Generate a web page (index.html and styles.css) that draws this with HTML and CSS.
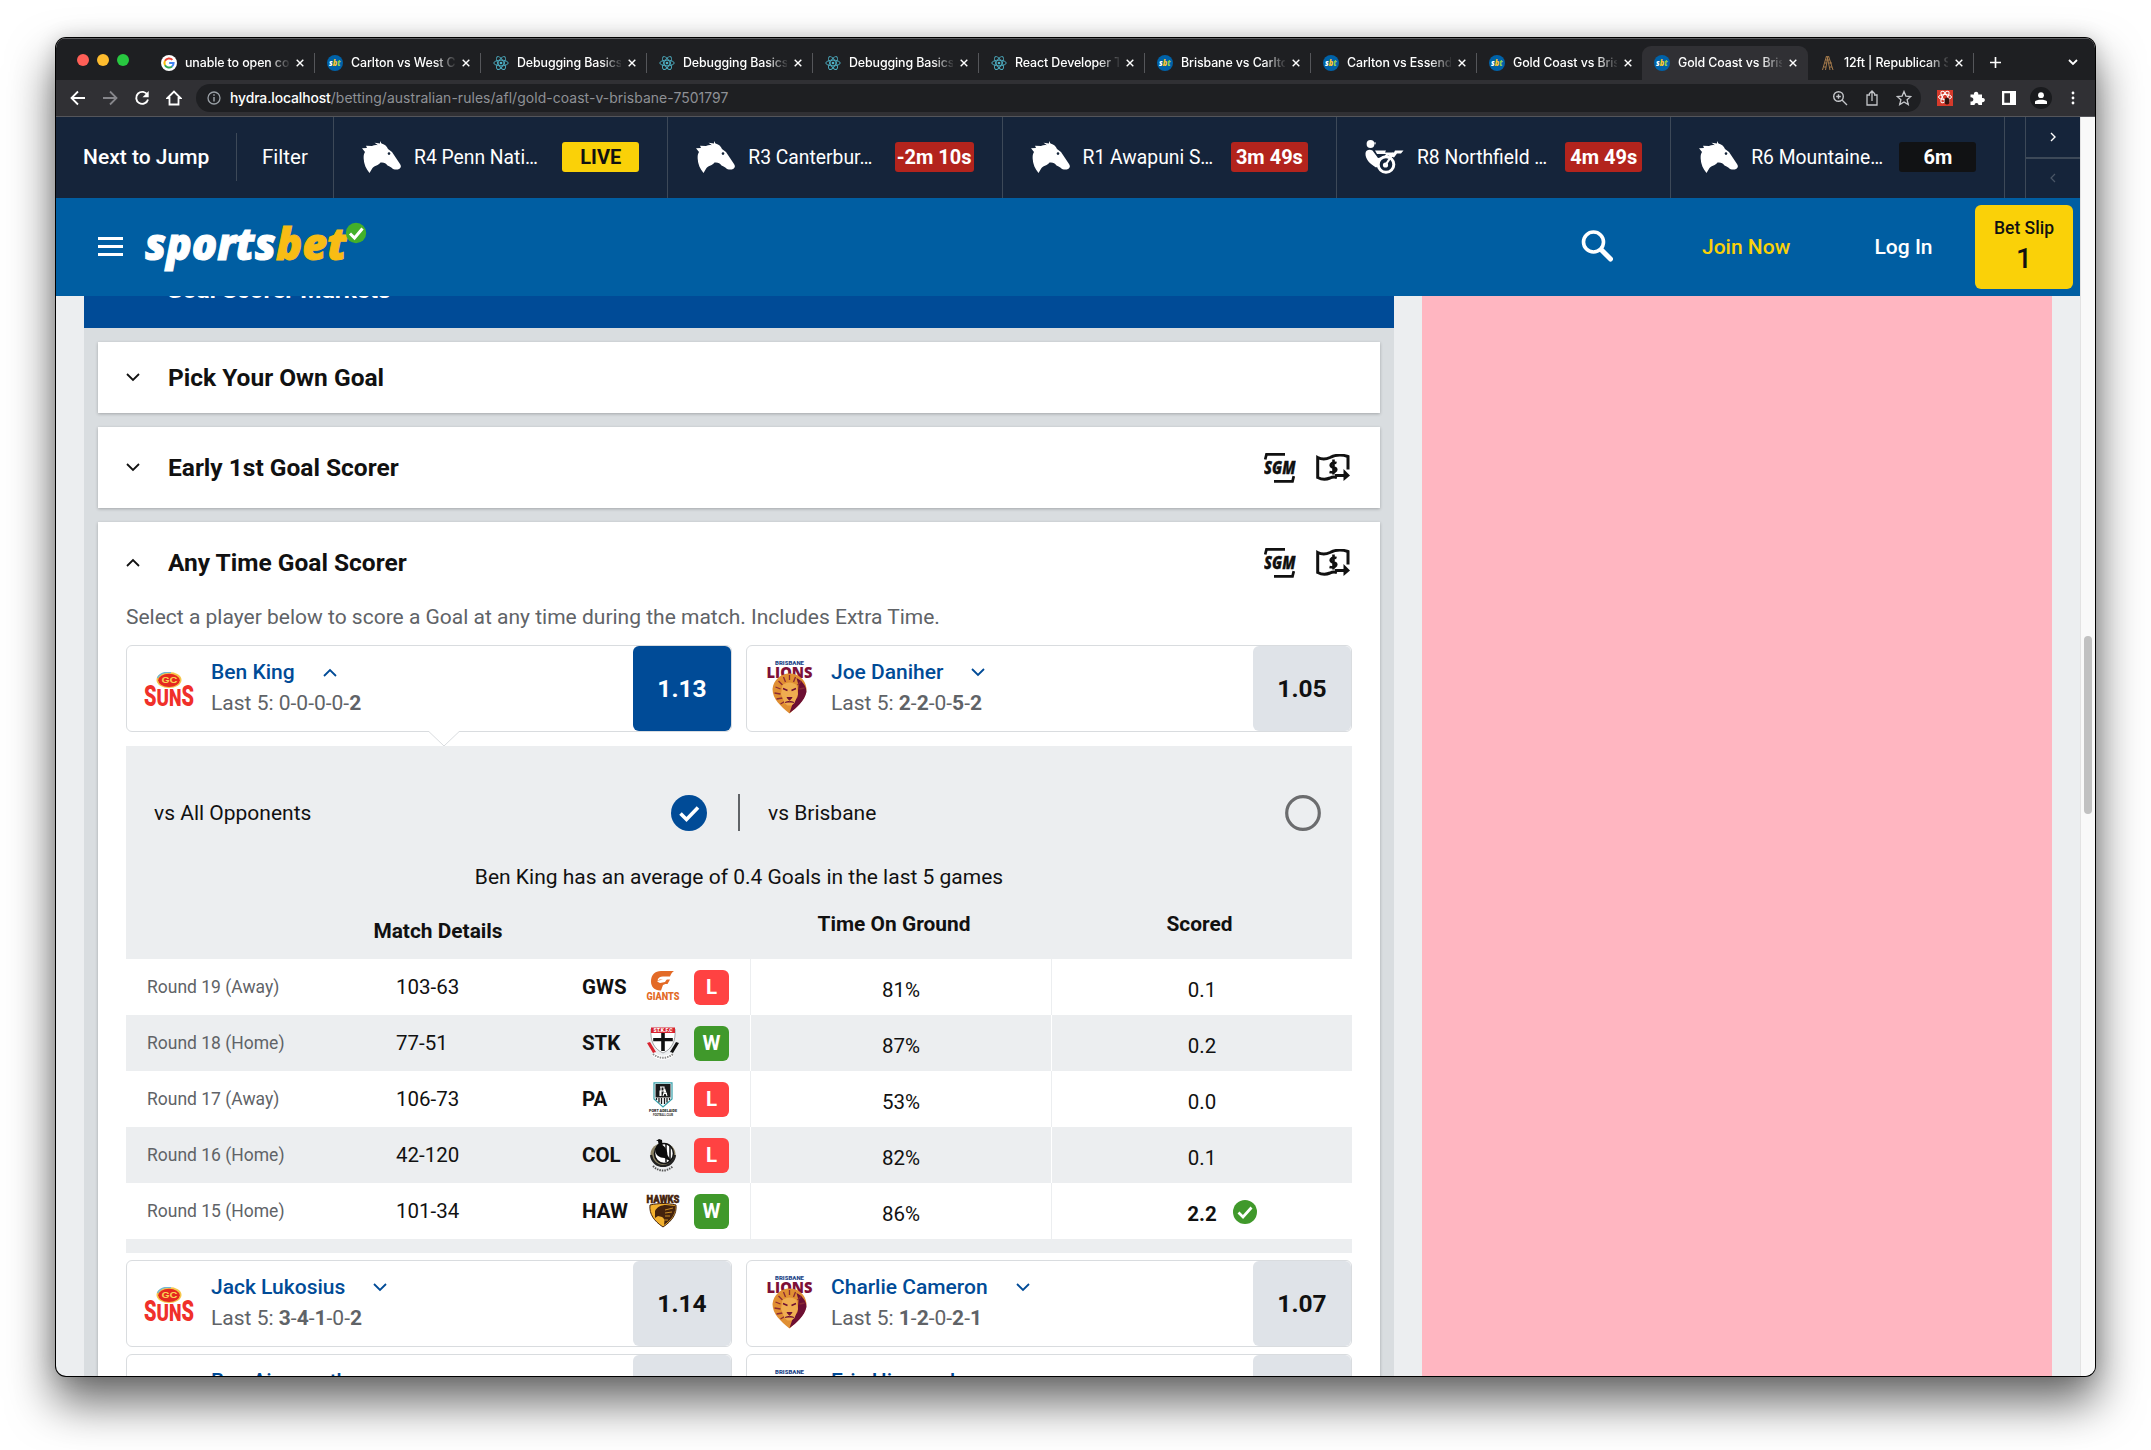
FILE: index.html
```html
<!DOCTYPE html>
<html lang="en">
<head>
<meta charset="utf-8">
<title>Gold Coast vs Brisbane</title>
<link rel="stylesheet" href="styles.css">
</head>
<body>
<svg class="sprite" aria-hidden="true">
  <symbol id="google" viewBox="0 0 16 16"><circle cx="8" cy="8" r="8" fill="#fff"/><g fill="none" stroke-width="2"><path d="M11.4 4.9A4.6 4.6 0 0 0 4 5.8" stroke="#ea4335"/><path d="M4 5.8a4.6 4.6 0 0 0 0 4.4" stroke="#fbbc05"/><path d="M4 10.2a4.6 4.6 0 0 0 7 1.3" stroke="#34a853"/><path d="M11 11.5A4.6 4.6 0 0 0 12.6 8H8.2" stroke="#4285f4"/></g></symbol>
  <symbol id="sbt" viewBox="0 0 16 16"><circle cx="8" cy="8" r="8" fill="#0062a8"/><text x="2" y="11" font-family="Open Sans" font-weight="800" font-style="italic" font-size="9" textLength="11.500" lengthAdjust="spacingAndGlyphs" fill="#fff">s<tspan fill="#ffc629">b</tspan><tspan fill="#8fd14f">t</tspan></text></symbol>
  <symbol id="react" viewBox="0 0 16 16"><g fill="none" stroke="#4fb3c8" stroke-width=".9"><ellipse cx="8" cy="8" rx="7.2" ry="2.8"/><ellipse cx="8" cy="8" rx="7.2" ry="2.8" transform="rotate(60 8 8)"/><ellipse cx="8" cy="8" rx="7.2" ry="2.8" transform="rotate(120 8 8)"/></g><circle cx="8" cy="8" r="1.3" fill="#4fb3c8"/></symbol>
  <symbol id="ladder" viewBox="0 0 16 16"><path d="M6.500 1 2.500 15M8 1 5.500 15M8.500 1l4.500 14M7 1l3 14M5.500 5h4M5 8h2M4 12h2M9 8h3M10 12h2" fill="none" stroke="#a57b4c" stroke-width="1"/></symbol>
  <symbol id="x" viewBox="0 0 8 8"><path d="M.7.7l6.600 6.600M7.300.7L.7 7.300" stroke="#fff" stroke-width="1.400"/></symbol>
  <symbol id="horse" viewBox="0 0 39 32"><path d="M18 0l1.500 2.500C22 3 25 5 26 8l4 3 4 6 4 6c1.500 2 1 4-1 5s-4 .5-6 0c-2-2-3-2.500-5.500-3.500-1.500-2.500-4-3.500-7-3-2 3-6 3-8 5.500L7.500 32C4 28 2 23 1.700 18c-.2-3 0-5 1.300-7L0 7.200l5-.3-1-2.200 6 .3c2-1 4-1.200 6-.8L12.500 1.800 18 2.500z" fill="#fff"/><circle cx="27" cy="12.600" r="1.300" fill="#14243a"/></symbol>
  <symbol id="harness" viewBox="0 0 39 34"><circle cx="5.500" cy="4" r="3.900" fill="#fff"/><path d="M9 2.500h2l-1 2.500z" fill="#fff"/><path d="M.5 13c.5-3 4-4 7-2.500L13 18l6-1 2-3h-9l-2-3.500h11l-1 2h9l1-2h8.500l-2.500 3h-4l-3 4-6-2-8 6-2 5-2 1C5 24 0 19 .5 13z" fill="#fff"/><circle cx="21" cy="24.500" r="7.800" fill="#14243a" stroke="#fff" stroke-width="3"/><circle cx="20.500" cy="25" r="2.600" fill="#fff"/><path d="M20.500 25l8-12" stroke="#fff" stroke-width="2.200" fill="none"/></symbol>
  <symbol id="down" viewBox="0 0 14 9"><path d="M1 1l6 6 6-6" fill="none" stroke="currentColor" stroke-width="1.800"/></symbol>
  <symbol id="up" viewBox="0 0 14 9"><path d="M1 8l6-6 6 6" fill="none" stroke="currentColor" stroke-width="1.800"/></symbol>
  <symbol id="sgm" viewBox="0 0 32 30"><path d="M1.200 6.500L2.500 1.300H21M10 28.300h18.500l1.300-5.200" fill="none" stroke="#111" stroke-width="2.700"/><text x="0" y="20.700" font-family="Open Sans" font-weight="800" font-style="italic" font-size="17" textLength="31.500" lengthAdjust="spacingAndGlyphs" fill="#111" stroke="#111" stroke-width=".3">SGM</text></symbol>
  <symbol id="cash" viewBox="0 0 34 27"><path d="M21 23.500c-3-1-5-.5-7 .5-4 1.700-8 1.700-12.300-.5V3.500c4 2 8 2 12.300 0 6-3 12-3 18-1v13" fill="none" stroke="#111" stroke-width="3"/><path d="M20.500 9c-6-2-8 4-3 4.500 5 .5 3 6-4 4.500M17.500 5.500v15" fill="none" stroke="#111" stroke-width="2.600"/><path d="M19 21.500h11" stroke="#111" stroke-width="3"/><path d="M27.500 15l6.500 6.500-6.500 5.500z" fill="#111"/></symbol>
  <symbol id="suns" viewBox="0 0 50 34"><ellipse cx="25" cy="8" rx="12.500" ry="8" fill="#f6c64a"/><path d="M13.500 6C16 1 22 0 27 .5" fill="none" stroke="#6fb7d8" stroke-width="1.400"/><ellipse cx="25" cy="8.300" rx="10.800" ry="6.600" fill="#e5281f"/><text x="17.500" y="11.300" font-family="Inter" font-weight="700" font-size="8" textLength="16" lengthAdjust="spacingAndGlyphs" fill="#f9cf55">GC</text><g font-family="Roboto" font-weight="900" fill="#f0302a"><text x="0" y="33.500" font-size="29" textLength="12.500" lengthAdjust="spacingAndGlyphs">S</text><text x="12.500" y="33.500" font-size="23.500" textLength="12.500" lengthAdjust="spacingAndGlyphs">U</text><text x="25" y="33.500" font-size="23.500" textLength="12.500" lengthAdjust="spacingAndGlyphs">N</text><text x="37.500" y="33.500" font-size="29" textLength="12.500" lengthAdjust="spacingAndGlyphs">S</text></g></symbol>
  <symbol id="lions" viewBox="0 0 46 54"><text x="8.500" y="4.500" font-family="Roboto" font-weight="900" font-size="5.800" textLength="29" lengthAdjust="spacingAndGlyphs" fill="#1c4587">BRISBANE</text><text x="0" y="17.500" font-family="Open Sans" font-weight="800" font-size="16.500" textLength="46" lengthAdjust="spacingAndGlyphs" fill="#7d1038">LIONS</text><path d="M23 13.500c9 0 16 6 17 15 0 10-8 17-17 25C14 46 6 39 6 29 7 20 14 13.500 23 13.500z" fill="#e08f33"/><path d="M30 18c6 3 10 8 10 14-2 9-10 16-17 21l3-9 5-7 1-12z" fill="#6d0f33"/><path d="M12 21l4 4M9 27l5 2M8 33l6 1M10 39l6-1M14 44l5-3M17 17l2 5M23 15v5M29 17l-2 5M35 21l-4 4M38 28l-5 1" stroke="#8a2a35" stroke-width="1.300"/><path d="M16 25c4-3.500 10-3.500 14 0l1.500 9L28 43l-3 2.500h-4L18 43l-3.500-9z" fill="#efad50"/><path d="M16.500 28.500l4.500 2M29.500 28.500l-4.500 2" stroke="#6d0f33" stroke-width="1.400"/><path d="M20.500 37.500h5l-2.500 2.800zM18.500 42.500c3-1.500 6-1.500 9 0" fill="#6d0f33" stroke="#6d0f33" stroke-width="1"/></symbol>
  <symbol id="gws" viewBox="0 0 34 34"><path d="M28 1c-2 1-3 3-4 5.500h-7c-3 0-5 1.500-5.500 4H21c-1 3-2 4-4 4.500l-2 5.500C9 21 5 17 5 11.500 5 5 9 1 15 1z" fill="#e36a26"/><path d="M13 9.500h11l-2.500 4.500h-5z" fill="#e36a26"/><path d="M11 11.500l6-2.500h4l-2 3-5 1z" fill="#fff"/><text x=".5" y="29.500" font-family="Roboto" font-weight="900" font-size="11" textLength="33" lengthAdjust="spacingAndGlyphs" fill="#e36a26">GIANTS</text></symbol>
  <symbol id="stk" viewBox="0 0 34 34"><path d="M5 3h24c1 12-3 20-12 24C8 23 4 15 5 3z" fill="#fff" stroke="#8d8f92" stroke-width=".8"/><path d="M5 1.500h24V7H5z" fill="#d8232f"/><text x="7.500" y="6.200" font-family="Roboto" font-weight="900" font-size="5" textLength="19" fill="#fff">ST.K.F.C</text><path d="M15.200 7h3.600v5h8v3.200h-8V25h-3.600v-9.800h-8V12h8z" fill="#111"/><path d="M1 17l3-1 6 10-3 1z" fill="#d8232f"/><path d="M33 17l-3-1-6 10 3 1z" fill="#111"/><path d="M7 28c6 5 14 5 20 0" fill="none" stroke="#fff" stroke-width="4"/><path d="M7 28c6 5 14 5 20 0" fill="none" stroke="#8b8b8b" stroke-width="2" stroke-dasharray="1.500 1"/></symbol>
  <symbol id="pa" viewBox="0 0 34 34"><path d="M8 .8h18V17l-9 8-9-8z" fill="#fff" stroke="#36a0ab" stroke-width="1.200"/><path d="M9.500 2h15v13.500h-15z" fill="#18191b"/><path d="M10.500 16v2M13 16v4.500M15.500 16v6M18.500 16v6M21 16v4.500M23.500 16v2" stroke="#18191b" stroke-width="1.300"/><path d="M14 5h4v4h-4v5M15 5v9M17 14l2-6 2 6M18 11.500h3" fill="none" stroke="#fff" stroke-width="1.100"/><text x="3" y="30" font-family="Roboto" font-weight="900" font-size="4" textLength="28" lengthAdjust="spacingAndGlyphs" fill="#222">PORT ADELAIDE</text><text x="7" y="33.500" font-family="Roboto" font-weight="700" font-size="2.800" textLength="20" fill="#333">FOOTBALL CLUB</text></symbol>
  <symbol id="col" viewBox="0 0 34 34"><ellipse cx="17" cy="16.500" rx="12.500" ry="11.500" fill="#8a8163"/><ellipse cx="18" cy="15.500" rx="9.500" ry="10" fill="#fff" stroke="#111" stroke-width="1.600"/><path d="M20 6v18M24 8v15" stroke="#111" stroke-width="1.500"/><path d="M10 3l3-2 3 1 .5 5c3 2 5 6 5 10l4 7-7-4c-5 0-9-3-9-7s1-6 3-7l-.5-3z" fill="#0c0c0c"/><path d="M5 17c1 7 6 11 12 11s11-4 12-11" fill="none" stroke="#222" stroke-width="2.200"/><path d="M7 28c6 6 14 6 20 0" fill="none" stroke="#555" stroke-width="2" stroke-dasharray="1.500 1"/></symbol>
  <symbol id="haw" viewBox="0 0 34 34"><text x=".5" y="8.500" font-family="Roboto" font-weight="900" font-size="11" textLength="33" lengthAdjust="spacingAndGlyphs" fill="#45230d" stroke="#45230d" stroke-width=".5">HAWKS</text><path d="M4 11c9-2 17-2 26 0 1 9-4 16-13 22C8 27 3 20 4 11z" fill="#f3b12e" stroke="#45230d" stroke-width="1"/><path d="M9 17c2-4 6-6 11-6l9.500 1c0 8-4 14-11.500 19 1-5 0-7-2-8l-4-1-3 2z" fill="#45230d"/><path d="M19 16l8-2M19 19l7-1M19 22l5 0M18 26l4 0" stroke="#c98c24" stroke-width="1"/></symbol>
  <symbol id="tick" viewBox="0 0 24 24"><circle cx="12" cy="12" r="12" fill="#40992b"/><path d="M5.500 12.500l4.500 4.500 8.500-9.500" fill="none" stroke="#fff" stroke-width="2.700"/></symbol>
</svg>

<div class="window">
  <div class="tabs">
    <div class="lights"><i class="red"></i><i class="amber"></i><i class="green"></i></div>
    <div class="tab"><svg class="fav"><use href="#google"/></svg><span>unable to open co</span><svg class="close"><use href="#x"/></svg></div>
    <div class="tab"><svg class="fav"><use href="#sbt"/></svg><span>Carlton vs West C</span><svg class="close"><use href="#x"/></svg></div>
    <div class="tab"><svg class="fav"><use href="#react"/></svg><span>Debugging Basics</span><svg class="close"><use href="#x"/></svg></div>
    <div class="tab"><svg class="fav"><use href="#react"/></svg><span>Debugging Basics</span><svg class="close"><use href="#x"/></svg></div>
    <div class="tab"><svg class="fav"><use href="#react"/></svg><span>Debugging Basics</span><svg class="close"><use href="#x"/></svg></div>
    <div class="tab"><svg class="fav"><use href="#react"/></svg><span>React Developer T</span><svg class="close"><use href="#x"/></svg></div>
    <div class="tab"><svg class="fav"><use href="#sbt"/></svg><span>Brisbane vs Carlto</span><svg class="close"><use href="#x"/></svg></div>
    <div class="tab"><svg class="fav"><use href="#sbt"/></svg><span>Carlton vs Essend</span><svg class="close"><use href="#x"/></svg></div>
    <div class="tab before-active"><svg class="fav"><use href="#sbt"/></svg><span>Gold Coast vs Bris</span><svg class="close"><use href="#x"/></svg></div>
    <div class="tab active"><svg class="fav"><use href="#sbt"/></svg><span>Gold Coast vs Bris</span><svg class="close"><use href="#x"/></svg></div>
    <div class="tab"><svg class="fav"><use href="#ladder"/></svg><span>12ft | Republican S</span><svg class="close"><use href="#x"/></svg></div>
    <svg class="plus" viewBox="0 0 12 12"><path d="M6 0v12M0 6h12" stroke="#fff" stroke-width="1.800"/></svg>
    <svg class="tab-menu" viewBox="0 0 10 7"><path d="M1 1l4 4 4-4" fill="none" stroke="#fff" stroke-width="1.800"/></svg>
  </div>

  <div class="toolbar">
    <svg class="nav" viewBox="0 0 16 16"><path d="M15 8H2M8 1.500L1.500 8 8 14.500" fill="none" stroke="#fff" stroke-width="1.800"/></svg>
    <svg class="nav" viewBox="0 0 16 16"><path d="M1 8h13M8 1.500L14.500 8 8 14.500" fill="none" stroke="#85858a" stroke-width="1.800"/></svg>
    <svg class="nav" viewBox="0 0 16 16"><path d="M13.500 5A6 6 0 1 0 14 9.500" fill="none" stroke="#fff" stroke-width="1.900"/><path d="M14.700 1v6.200H8.500z" fill="#fff"/></svg>
    <svg class="nav" viewBox="0 0 16 16"><path d="M1.500 8L8 1.500 14.500 8H12.500v6.500h-9V8z" fill="none" stroke="#fff" stroke-width="1.800"/></svg>
    <div class="omnibox">
      <svg class="info" viewBox="0 0 14 14"><circle cx="7" cy="7" r="6" fill="none" stroke="#9aa0a6" stroke-width="1.300"/><path d="M7 6v4.500M7 3.300v1.500" stroke="#9aa0a6" stroke-width="1.500"/></svg>
      <p class="url"><b>hydra.localhost</b>/betting/australian-rules/afl/gold-coast-v-brisbane-7501797</p>
      <svg class="act" viewBox="0 0 16 16"><circle cx="6.500" cy="6.500" r="4.800" fill="none" stroke="#c4c6ca" stroke-width="1.400"/><path d="M10 10l5 5M4.200 6.500h4.600M6.500 4.200v4.600" stroke="#c4c6ca" stroke-width="1.400"/></svg>
      <svg class="act" viewBox="0 0 16 16"><path d="M6 5H3v10h10V5h-3M8 11V1.500M5 4l3-3 3 3" fill="none" stroke="#c4c6ca" stroke-width="1.300"/></svg>
      <svg class="act" viewBox="0 0 16 16"><path d="M8 1.500l1.900 4.600 4.900.4-3.700 3.200 1.200 4.900L8 12l-4.300 2.600 1.200-4.900L1.200 6.500l4.900-.4z" fill="none" stroke="#c4c6ca" stroke-width="1.300"/></svg>
    </div>
    <svg class="ext" viewBox="0 0 16 16"><path d="M0 0h16v16H0z" fill="#d63a2b"/><g fill="none" stroke="#fff"><ellipse cx="8" cy="7" rx="6.500" ry="2.500"/><ellipse cx="8" cy="7" rx="6.500" ry="2.500" transform="rotate(60 8 7)"/><ellipse cx="8" cy="7" rx="6.500" ry="2.500" transform="rotate(120 8 7)"/></g><ellipse cx="10" cy="11" rx="2.500" ry="3.500" fill="#34110d"/></svg>
    <svg class="ext" viewBox="0 0 16 16"><path d="M1.500 4.500H5a2.200 2.200 0 1 1 4.200 0H13V8a2.200 2.200 0 1 1 0 4.200V15H9.500a2 2 0 1 0-4 0h-4v-3.500a2.200 2.200 0 1 0 0-4.200z" fill="#fff"/></svg>
    <svg class="ext" viewBox="0 0 16 16"><path d="M1 1h14v14H1zM3.300 3.300v9.400H9V3.300z" fill="#fff" fill-rule="evenodd"/></svg>
    <span class="avatar"><svg viewBox="0 0 12 12"><circle cx="6" cy="3.200" r="2.900" fill="#fff"/><path d="M0 12V9.500C1 7 11 7 12 9.500V12z" fill="#fff"/></svg></span>
    <svg class="ext" viewBox="0 0 16 16"><circle cx="8" cy="3" r="1.400" fill="#fff"/><circle cx="8" cy="8" r="1.400" fill="#fff"/><circle cx="8" cy="13" r="1.400" fill="#fff"/></svg>
  </div>

  <div class="viewport">
    <div class="page">
      <div class="jump">
        <div class="jump-head"><span class="jump-title">Next to Jump</span><span class="filter">Filter</span></div>
        <div class="race"><svg class="horse"><use href="#horse"/></svg><span class="name">R4 Penn Nati…</span><span class="pill live">LIVE</span></div>
        <div class="race"><svg class="horse"><use href="#horse"/></svg><span class="name">R3 Canterbur…</span><span class="pill">-2m 10s</span></div>
        <div class="race"><svg class="horse"><use href="#horse"/></svg><span class="name">R1 Awapuni S…</span><span class="pill">3m 49s</span></div>
        <div class="race"><svg class="horse"><use href="#harness"/></svg><span class="name">R8 Northfield …</span><span class="pill">4m 49s</span></div>
        <div class="race"><svg class="horse"><use href="#horse"/></svg><span class="name">R6 Mountaine…</span><span class="pill dark">6m</span></div>
        <div class="jump-rest"></div>
        <div class="pager">
          <div><svg viewBox="0 0 6 10"><path d="M1 1l4 4-4 4" fill="none" stroke="#fff" stroke-width="1.400"/></svg></div>
          <div><svg viewBox="0 0 6 10"><path d="M5 1L1 5l4 4" fill="none" stroke="#4a5666" stroke-width="1.200"/></svg></div>
        </div>
      </div>

      <header class="header">
        <div class="burger"><i></i><i></i><i></i></div>
        <svg class="logo" viewBox="0 0 226 58"><g font-family="Open Sans" font-weight="800" font-style="italic" font-size="43.500"><text x="1" y="40.500" textLength="131" lengthAdjust="spacingAndGlyphs" fill="#fff" stroke="#fff" stroke-width="1">sports</text><text x="132" y="40.500" textLength="71" lengthAdjust="spacingAndGlyphs" fill="#f8bc14" stroke="#f8bc14" stroke-width="1">bet</text></g><circle cx="212" cy="14" r="10.200" fill="#43b02a"/><path d="M206 14.500l4.500 4.500 8-9.500" fill="none" stroke="#fff" stroke-width="3"/></svg>
        <svg class="search" viewBox="0 0 32 32"><circle cx="12.500" cy="12" r="10" fill="none" stroke="#fff" stroke-width="3.600"/><path d="M20.500 20l9 9" stroke="#fff" stroke-width="5" stroke-linecap="round"/></svg>
        <a class="join">Join Now</a>
        <a class="login">Log In</a>
        <div class="slip"><span>Bet Slip</span><b>1</b></div>
      </header>

      <div class="body">
        <main class="markets">
          <h2 class="section"><span>Goal Scorer Markets</span></h2>
          <section class="market short"><div class="market-head"><svg class="chev"><use href="#down"/></svg><h3>Pick Your Own Goal</h3></div></section>
          <section class="market"><div class="market-head"><svg class="chev"><use href="#down"/></svg><h3>Early 1st Goal Scorer</h3><svg class="sgm"><use href="#sgm"/></svg><svg class="cash"><use href="#cash"/></svg></div></section>
          <section class="market open">
            <div class="market-head"><svg class="chev"><use href="#up"/></svg><h3>Any Time Goal Scorer</h3><svg class="sgm"><use href="#sgm"/></svg><svg class="cash"><use href="#cash"/></svg></div>
            <p class="hint">Select a player below to score a Goal at any time during the match. Includes Extra Time.</p>
            <div class="players">
              <div class="player picked"><svg class="suns"><use href="#suns"/></svg><div class="info-col"><p class="pname">Ben King<svg class="chev"><use href="#up"/></svg></p><p class="last">Last 5: 0-0-0-0-<b>2</b></p></div><div class="odds">1.13</div><svg class="notch" viewBox="0 0 30 16"><path d="M0 0h30v1L15 15.500 0 1z" fill="#fff"/><path d="M0 .7L15 15 30 .7" fill="none" stroke="#d9dcdf"/></svg></div>
              <div class="player"><svg class="lions"><use href="#lions"/></svg><div class="info-col"><p class="pname">Joe Daniher<svg class="chev"><use href="#down"/></svg></p><p class="last">Last 5: <b>2</b>-<b>2</b>-0-<b>5</b>-<b>2</b></p></div><div class="odds">1.05</div></div>
            </div>
            <div class="stats">
              <div class="versus">
                <div class="opt"><span>vs All Opponents</span><svg class="radio" viewBox="0 0 36 36"><circle cx="18" cy="18" r="18" fill="#004b97"/><path d="M9.500 18.500l6 6 11.500-12" fill="none" stroke="#fff" stroke-width="3.600"/></svg></div>
                <div class="opt right"><span>vs Brisbane</span><svg class="radio" viewBox="0 0 36 36"><circle cx="18" cy="18" r="16.300" fill="none" stroke="#6b6c6e" stroke-width="3.200"/></svg></div>
              </div>
              <p class="average">Ben King has an average of 0.4 Goals in the last 5 games</p>
              <div class="thead"><b class="h-match">Match Details</b><b class="h-time">Time On Ground</b><b class="h-score">Scored</b></div>
              <div class="trow"><div class="match"><span class="round">Round 19 (Away)</span><span class="result">103-63</span><b>GWS</b><svg class="crest"><use href="#gws"/></svg><i class="wl loss">L</i></div><div class="num">81%</div><div class="num">0.1</div></div>
              <div class="trow"><div class="match"><span class="round">Round 18 (Home)</span><span class="result">77-51</span><b>STK</b><svg class="crest"><use href="#stk"/></svg><i class="wl">W</i></div><div class="num">87%</div><div class="num">0.2</div></div>
              <div class="trow"><div class="match"><span class="round">Round 17 (Away)</span><span class="result">106-73</span><b>PA</b><svg class="crest"><use href="#pa"/></svg><i class="wl loss">L</i></div><div class="num">53%</div><div class="num">0.0</div></div>
              <div class="trow"><div class="match"><span class="round">Round 16 (Home)</span><span class="result">42-120</span><b>COL</b><svg class="crest"><use href="#col"/></svg><i class="wl loss">L</i></div><div class="num">82%</div><div class="num">0.1</div></div>
              <div class="trow"><div class="match"><span class="round">Round 15 (Home)</span><span class="result">101-34</span><b>HAW</b><svg class="crest"><use href="#haw"/></svg><i class="wl">W</i></div><div class="num">86%</div><div class="num"><b class="hit">2.2<svg><use href="#tick"/></svg></b></div></div>
            </div>
            <div class="players">
              <div class="player"><svg class="suns"><use href="#suns"/></svg><div class="info-col"><p class="pname">Jack Lukosius<svg class="chev"><use href="#down"/></svg></p><p class="last">Last 5: <b>3</b>-<b>4</b>-<b>1</b>-0-<b>2</b></p></div><div class="odds">1.14</div></div>
              <div class="player"><svg class="lions"><use href="#lions"/></svg><div class="info-col"><p class="pname">Charlie Cameron<svg class="chev"><use href="#down"/></svg></p><p class="last">Last 5: <b>1</b>-<b>2</b>-0-<b>2</b>-<b>1</b></p></div><div class="odds">1.07</div></div>
              <div class="player"><svg class="suns"><use href="#suns"/></svg><div class="info-col"><p class="pname">Ben Ainsworth</p></div><div class="odds"></div></div>
              <div class="player"><svg class="lions"><use href="#lions"/></svg><div class="info-col"><p class="pname">Eric Hipwood</p></div><div class="odds"></div></div>
            </div>
          </section>
        </main>
        <aside class="ad"></aside>
      </div>
    </div>
    <div class="scrollbar"><i></i></div>
  </div>
</div>
</body>
</html>
```
FILE: styles.css
```css
* { box-sizing: border-box; margin: 0; padding: 0; }
html, body { height: 1450px; overflow: hidden; background: #fff; }
body { padding: 38px 56px 0 56px; font-family: Roboto, sans-serif; color: #111; }
svg { display: block; flex: none; }
.sprite { display: none; }

.window {
  height: 1338px; border-radius: 10px; overflow: hidden; background: #eceef0;
  display: flex; flex-direction: column;
  box-shadow: 0 0 0 1px #000, 0 0 20px rgba(0,0,0,.16), 0 25px 46px 2px rgba(0,0,0,.58);
}

/* browser chrome */
.tabs {
  height: 42px; flex: none; background: #1e1f22; border-top: 1px solid #5c5d60;
  display: flex; align-items: flex-end; color: #fff; font: 500 12.400px Inter, sans-serif;
}
.lights { width: 93px; height: 41px; padding: 0 0 0 21px; display: flex; gap: 8px; align-items: center; }
.lights i { width: 12px; height: 12px; border-radius: 50%; }
.red { background: #ff5f57; } .amber { background: #febc2e; } .green { background: #28c840; }
.tab { width: 166px; height: 34px; padding: 0 10px 1px 12px; display: flex; align-items: center; position: relative; }
.tab::after { content: ""; position: absolute; right: 0; top: 7px; width: 1px; height: 20px; background: #55565a; }
.tab.active::after, .tab.before-active::after { display: none; }
.tab.before-active { width: 165px; }
.tab.active { background: #303034; border-radius: 9px 9px 0 0; }
.fav { width: 16px; height: 16px; margin-right: 8px; }
.tab span {
  width: 104px; flex: none; overflow: hidden; white-space: nowrap; letter-spacing: -.1px;
  -webkit-mask-image: linear-gradient(90deg, #000 80%, transparent 102%); mask-image: linear-gradient(90deg, #000 80%, transparent 102%);
}
.close { width: 8px; height: 8px; margin-left: 7px; }
.plus { width: 11px; height: 11px; margin: 0 0 12px 16px; }
.tab-menu { width: 10px; height: 7px; margin: 0 17px 14px auto; }
.toolbar {
  height: 37px; flex: none; background: #303034; border-bottom: 1px solid #54555a;
  display: flex; align-items: center; padding: 0 14px 0 14px; gap: 16px;
}
.nav { width: 16px; height: 16px; }
.omnibox {
  flex: 1; height: 28px; border-radius: 14px; background: #1e1f22; margin-left: -2px;
  display: flex; align-items: center; padding: 0 9px 0 11px; gap: 16px;
}
.info { width: 14px; height: 14px; margin-right: -7px; }
.url { flex: 1; font: 13.900px Inter, sans-serif; color: #8f9196; white-space: nowrap; letter-spacing: .08px; }
.url b { font-weight: 500; color: #fff; letter-spacing: -.1px; }
.act { width: 16px; height: 16px; }
.ext { width: 16px; height: 16px; }
.avatar { width: 22px; height: 22px; margin: 0 -3px; border-radius: 50%; background: #1a1b1e; display: grid; place-items: center; }
.avatar svg { width: 12px; height: 12px; }

/* viewport */
.viewport { flex: 1; min-height: 0; display: flex; }
.page { flex: 1; display: flex; flex-direction: column; min-width: 0; overflow: hidden; }
.scrollbar { width: 15px; background: #f9f9f9; border-left: 1px solid #e3e3e3; padding: 519px 0 0 3px; }
.scrollbar i { display: block; width: 8px; height: 178px; border-radius: 4px; background: #c1c1c1; }

.jump { height: 81px; flex: none; background: #15243a; color: #fff; display: flex; font-size: 20px; }
.jump-head { width: 278px; border-right: 1px solid #3d4958; display: flex; align-items: center; padding: 0 0 1px 27px; }
.jump-title { width: 154px; font-weight: 500; font-size: 21px; line-height: 48px; border-right: 1px solid #3d4958; white-space: nowrap; }
.filter { padding-left: 25px; font-size: 20.500px; }
.race { width: 334.300px; border-right: 1px solid #3d4958; display: flex; align-items: center; padding: 0 28px 1px; white-space: nowrap; }
.horse { width: 39px; height: 34px; margin-right: 13px; }
.name { flex: 1; font-size: 19.300px; }
.pill { min-width: 77px; height: 30px; padding: 0 2px; border-radius: 3px; background: #b3241d; font-weight: 700; line-height: 30px; text-align: center; }
.pill.live { background: #fad108; color: #111; }
.pill.dark { background: #111214; }
.jump-rest { flex: 1; }
.pager { width: 55px; border-left: 1px solid #3d4958; display: flex; flex-direction: column; }
.pager div { flex: 1; display: grid; place-items: center; }
.pager div:first-child { border-bottom: 2px solid #3d4958; }
.pager svg { width: 6px; height: 10px; }

.header { height: 98px; flex: none; background: #005ea2; color: #fff; display: flex; align-items: center; padding: 0 7px 0 42px; position: relative; z-index: 1; }
.burger { width: 25px; height: 19px; margin-top: -1px; display: flex; flex-direction: column; justify-content: space-between; }
.burger i { height: 3px; background: #fff; }
.logo { width: 226px; height: 58px; margin: 2px 0 0 21px; }
.search { width: 32px; height: 32px; margin: -2px 89px 0 auto; }
.join, .login { font-weight: 500; font-size: 21px; white-space: nowrap; }
.join { color: #fad108; width: 172.500px; }
.login { width: 100.500px; }
.slip { width: 98px; height: 84px; border-radius: 6px; background: #fad108; color: #111; display: flex; flex-direction: column; align-items: center; padding-top: 11px; }
.slip span { font-size: 17.500px; line-height: 24px; font-weight: 500; }
.slip b { font-size: 28px; line-height: 38px; font-weight: 500; }

/* markets */
.body { flex: 1; min-height: 0; display: flex; justify-content: space-between; padding: 0 28px; }
.markets { width: 1310px; background: #d9dde0; overflow: hidden; }
.section { height: 32px; background: #004b97; color: #fff; padding-left: 82px; font-size: 24.400px; font-weight: 700; display: flex; align-items: flex-start; overflow: hidden; }
.section span { margin-top: -20px; line-height: 28px; }
.market { margin: 14px 14px 0 14px; padding: 0 28px; background: #fff; box-shadow: 0 1px 3px rgba(0,0,0,.25); }
.market-head { height: 81px; display: flex; align-items: center; }
.short .market-head { height: 71px; }
.chev { width: 14px; height: 9px; }
h3 { flex: 1; margin-left: 28px; font-size: 24.500px; font-weight: 700; }
.sgm { width: 32px; height: 30px; margin-right: 20px; }
.cash { width: 34px; height: 27px; margin-right: 2px; }
.open { height: 900px; }
.hint { height: 42px; line-height: 28px; font-size: 21px; color: #606367; }
.players { display: grid; grid-template-columns: 1fr 1fr; gap: 7px 14px; }
.player { height: 87px; border: 1px solid #d9dcdf; border-radius: 6px; display: flex; align-items: center; position: relative; padding-left: 17px; }
.suns { width: 50px; height: 34px; margin-right: 17px; }
.lions { width: 47px; height: 54px; margin: -4px 18px 0 2px; }
.info-col { flex: 1; height: 62px; margin-top: -2px; font-size: 21px; line-height: 31px; }
.pname { display: flex; align-items: center; gap: 28px; color: #004b97; font-weight: 500; }
.last { color: #606367; }
.odds { width: 98px; align-self: stretch; border-radius: 6px; background: #dfe3e8; display: grid; place-items: center; font-size: 24.500px; font-weight: 700; }
.picked .odds { background: #004b97; color: #fff; }
.notch { position: absolute; left: 302px; top: 85px; width: 30px; height: 16px; z-index: 1; }

.stats { margin: 14px 0 7px; padding-bottom: 14px; background: #eceef0; font-size: 20.500px; }
.versus { padding-top: 48px; height: 104px; display: flex; align-items: flex-start; font-size: 21px; }
.opt { display: flex; width: 614px; height: 37px; align-items: center; justify-content: space-between; padding: 0 31px 0 28px; border-right: 2px solid #606367; }
.opt.right { width: 612px; padding-right: 31px; border: 0; }
.radio { width: 36px; height: 36px; }
.average { height: 54px; line-height: 54px; text-align: center; font-size: 21px; }
.thead { height: 55px; display: grid; grid-template-columns: 624px 301px 1fr; text-align: center; font-size: 20.900px; }
.thead b { font-weight: 700; line-height: 40px; }
.h-match { padding-top: 7px; }
.h-time { padding-right: 13px; }
.h-score { padding-right: 4px; }
.trow { height: 56px; background: #fff; display: grid; grid-template: 56px / 625px 301px 1fr; }
.trow:nth-child(odd) { background: #eceef0; }
.trow > div { border-right: 1px solid #eceef0; }
.trow:nth-child(odd) > div { border-color: #fff; }
.trow > div:last-child { border: 0; }
.match { display: flex; align-items: center; padding-left: 21px; }
.round { width: 249px; font-size: 17.500px; color: #606367; }
.result { width: 186px; }
.match b { width: 64px; font-weight: 700; }
.crest { width: 34px; height: 34px; margin-right: 14px; }
.wl { width: 35px; height: 35px; border-radius: 6px; background: #40992b; color: #fff; font-style: normal; font-weight: 700; line-height: 34px; text-align: center; }
.loss { background: #ff4242; }
.num { line-height: 62px; text-align: center; }
.hit { position: relative; }
.hit svg { position: absolute; left: 46px; top: -2px; width: 24px; height: 24px; }

.ad { width: 630px; background: #ffb6c1; }
```
